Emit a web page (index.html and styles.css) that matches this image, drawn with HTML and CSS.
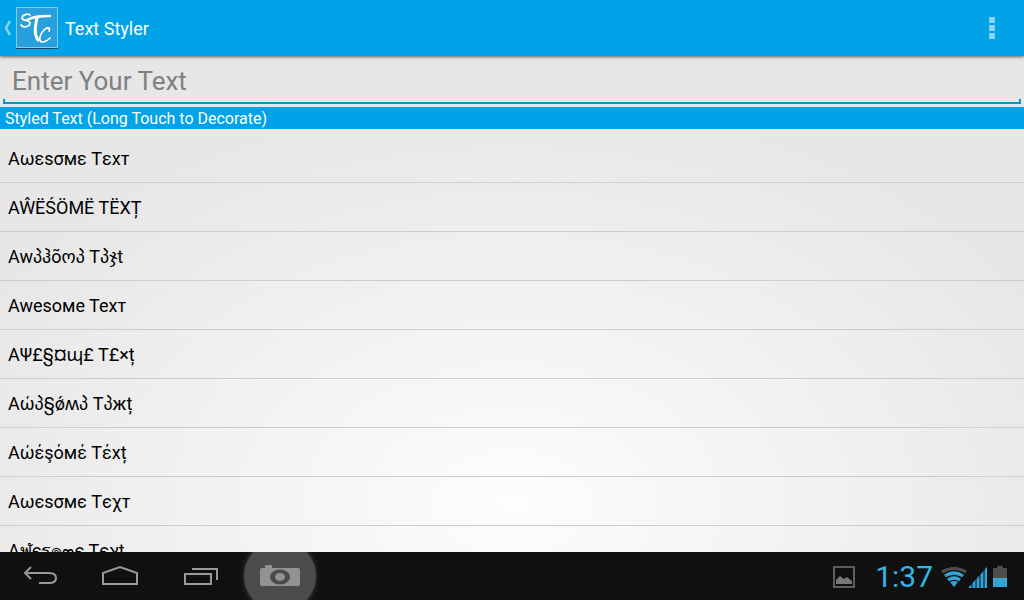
FILE: index.html
```html
<!DOCTYPE html>
<html lang="en">
<head>
  <meta charset="UTF-8">
  <meta name="viewport" content="width=device-width, initial-scale=1">
  <title>Text Styler</title>
  <link rel="stylesheet" href="styles.css">
</head>
<body>

<!-- Action bar -->
<header class="action-bar">
  <a href="#" class="up" aria-label="Navigate up">
    <svg class="chevron" width="8" height="16" viewBox="0 0 8 16" fill="none" stroke="#8fd3f5" stroke-width="2.5"><path d="M6 1L2 8l4 7"/></svg>
    <svg class="logo" width="42" height="42" viewBox="0 0 42 42">
      <path d="M0 41.500h42" stroke="#174a66"/>
      <path d="M.5.5h41v40H.5z" fill="#29a0db" stroke="#83cdf0"/>
      <g fill="none" stroke="#fff" stroke-linecap="round" stroke-linejoin="round">
        <path d="M14 8c-2-2-8 0-8 3 0 3 8 2 8 5 0 4-7 5-9 2" stroke-width="1.7"/>
        <path d="M11 13c7-4 15-4 23-4" stroke-width="2.4"/>
        <path d="M21 11c-2 9-3 16 1 22" stroke-width="3"/>
        <path d="M33 24c2-4-2-4-5-1-4 4-6 11-2 12 3 0 6-2 8-4" stroke-width="1.7"/>
      </g>
    </svg>
  </a>
  <h1>Text Styler</h1>
  <button class="overflow" aria-label="More options"><span></span><span></span><span></span></button>
</header>

<!-- Text to style -->
<main class="content">
  <div class="field">
    <input type="text" id="source" placeholder="Enter Your Text" aria-label="Enter Your Text">
  </div>
  <h2>Styled Text (Long Touch to Decorate)</h2>
  <ul class="styles">
    <li>Aωεsσмε Tεxт</li>
    <li>AŴËŚÖMË TËXȚ</li>
    <li>Awპჰõოპ Tპჯt</li>
    <li>Awesoмe Texт</li>
    <li>AΨ£§¤ɰ£ T£×ț</li>
    <li>Aώპ§ǿʍპ Tპжț</li>
    <li>Aώέşόмέ Tέxț</li>
    <li>Aωєsσмє Tєχт</li>
    <li>Aฬєร๏๓є Tєץt</li>
  </ul>
</main>

<!-- System bar -->
<footer class="system-bar">
  <nav>
    <button aria-label="Back">
      <svg width="36" height="24" viewBox="0 0 36 24" fill="none" stroke="#999" stroke-width="2"><path d="M9 3L3 9l6 6M3 9h24q7 0 7 5t-7 5H17"/></svg>
    </button>
    <button aria-label="Home">
      <svg width="38" height="24" viewBox="0 0 38 24" fill="none" stroke="#999" stroke-width="2"><path d="M2 20V9l17-6 17 6v11z"/></svg>
    </button>
    <button aria-label="Recent apps">
      <svg width="36" height="24" viewBox="0 0 36 24" fill="none" stroke="#999" stroke-width="2"><path d="M3 10h26v10H3zM10 5h25v11"/></svg>
    </button>
    <button class="camera" aria-label="Screenshot">
      <svg width="40" height="24" viewBox="0 0 40 24" fill="#919291"><path fill-rule="evenodd" d="M2 4h3V2q0-1 1-1h5q1 0 1 1v2h26q2 0 2 2v14q0 2-2 2H2q-2 0-2-2V6q0-2 2-2zM20 5.500C14.500 5.500 10 8.700 10 13s4.500 7.500 10 7.500S30 17.300 30 13 25.500 5.500 20 5.500z"/><ellipse cx="20" cy="13" rx="7" ry="5" fill="#4b4c4b"/><ellipse cx="20" cy="13" rx="5" ry="4"/></svg>
    </button>
  </nav>
  <div class="status">
    <svg class="picture" width="22" height="22" viewBox="0 0 22 22"><path d="M1 1h20v20H1z" fill="none" stroke="#777" stroke-width="1.500"/><path d="M3 18v-4l4-4 4 3 3-2 5 4v3z" fill="#777"/></svg>
    <time>1:37</time>
    <svg width="26" height="20" viewBox="0 0 26 20" fill="none" stroke="#33a5d5" stroke-width="3.2"><path d="M1 5q12-7 24 0" stroke="#4d4d4d"/><path d="M4 9q9-6 18 0M7 13q6-4 12 0"/><path d="M9 15q4-2 8 0l-4 5z" fill="#33a5d5" stroke="none"/></svg>
    <svg class="signal" width="20" height="22" viewBox="0 0 20 22"><path d="M0 22L19 1v21z" fill="#1e5870"/><path d="M1 22v-1l2-2v3zM5 22v-5l2-3v8zM9 22v-9l2-3v12zM13 22V8l2-2v16zM17 22V3l2-2v21z" fill="#33a5d5"/></svg>
    <svg width="14" height="22" viewBox="0 0 14 22"><path d="M0 2h4V0h6v2h4v11H0z" fill="#4d4d4d"/><path d="M0 12h14v9H0z" fill="#33a5d5"/></svg>
  </div>
</footer>

</body>
</html>
```
FILE: styles.css
```css
* {
  box-sizing: border-box;
}
body {
  margin: 0;
  height: 100vh;
  display: flex;
  flex-direction: column;
  overflow: hidden;
  font-family: Roboto, "Noto Sans", "DejaVu Sans", sans-serif;
  color: #000;
  background: #e7e7e7;
}
h1, h2 {
  margin: 0;
  font-weight: 400;
}
button {
  padding: 0;
  border: none;
  background: none;
  cursor: pointer;
}
svg {
  display: block;
}

/* Action bar */
.action-bar {
  flex: none;
  height: 56px;
  display: flex;
  align-items: center;
  padding: 0 16px 0 4px;
  background: #00a2e8;
  box-shadow: 0 1px 3px rgba(0,0,0,0.6);
  z-index: 1;
}
.up {
  display: flex;
  align-items: center;
  gap: 4px;
}
.action-bar h1 {
  flex: 1;
  padding-left: 7px;
  font-size: 18px;
  color: #fff;
}
.overflow {
  width: 32px;
  height: 48px;
  display: flex;
  flex-direction: column;
  align-items: center;
  justify-content: center;
  gap: 2px;
}
.overflow span {
  width: 6px;
  height: 6px;
  background: #88d2f4;
}

/* Text field and list */
.content {
  flex: 1;
  min-height: 0;
  overflow: hidden;
  background: radial-gradient(600px 400px at 50% 90%, #fdfdfd, #e7e7e7);
}
.field {
  padding: 0 3px 3px;
}
.field input {
  display: block;
  width: 100%;
  height: 48px;
  padding: 4px 9px 0;
  border: solid #0099cc;
  border-width: 0 0 2px;
  background:
    linear-gradient(#0099cc, #0099cc) left bottom / 2px 3px no-repeat,
    linear-gradient(#0099cc, #0099cc) right bottom / 2px 3px no-repeat;
  font-family: inherit;
  font-size: 26px;
  outline: none;
}
.field input::placeholder {
  color: #808080;
}
.content h2 {
  padding: 2px 5px 0;
  font-size: 16px;
  line-height: 20px;
  color: #fff;
  background: #00a2e8;
}
.styles {
  margin: 0;
  padding: 5px 0 0;
  list-style: none;
}
.styles li {
  height: 49px;
  padding: 0 8px;
  border-bottom: 1px solid #cdcdcd;
  font-size: 18px;
  line-height: 49px;
  white-space: nowrap;
}

/* System bar */
.system-bar {
  flex: none;
  height: 48px;
  display: flex;
  justify-content: space-between;
  background: #101010;
  overflow: hidden;
}
.system-bar nav {
  display: flex;
}
.system-bar nav button {
  width: 80px;
  display: flex;
  align-items: center;
  justify-content: center;
}
.system-bar nav .camera {
  background: radial-gradient(circle, #4b4c4b 35px, #1c1f1c 37px, #101010 40px);
}
.status {
  display: flex;
  align-items: center;
  padding: 2px 17px 0 0;
}
.status .picture {
  margin-right: 20px;
}
.status time {
  margin-right: 8px;
  font-size: 30px;
  line-height: 46px;
  color: #33b5e5;
}
.status .signal {
  margin: 0 5px 0 1px;
}
```
